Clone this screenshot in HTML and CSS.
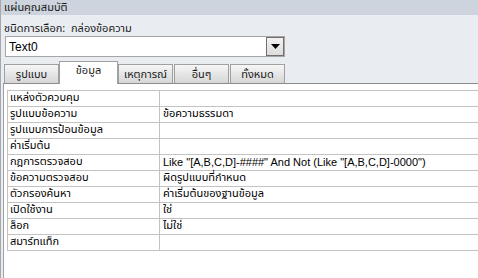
FILE: index.html
```html
<!DOCTYPE html>
<html>
<head>
<meta charset="utf-8">
<link rel="stylesheet" href="styles.css">
</head>
<body>
<div class="frame">
  <div class="titlebar">แผ่นคุณสมบัติ</div>
  <div class="selection">ชนิดการเลือก:&nbsp; กล่องข้อความ</div>
  <div class="combo">
    <span class="combo-text">Text0</span>
    <span class="combo-btn"><svg width="9" height="5" viewBox="0 0 9 5"><path d="M0 0H9L4.5 5Z" fill="#000"/></svg></span>
  </div>
  <div class="tabs">
    <div class="tab">รูปแบบ</div>
    <div class="tab active">ข้อมูล</div>
    <div class="tab">เหตุการณ์</div>
    <div class="tab">อื่นๆ</div>
    <div class="tab">ทั้งหมด</div>
  </div>
  <div class="panel">
    <div class="grid">
      <div class="row"><div class="k">แหล่งตัวควบคุม</div><div class="v"></div></div>
      <div class="row"><div class="k">รูปแบบข้อความ</div><div class="v">ข้อความธรรมดา</div></div>
      <div class="row"><div class="k">รูปแบบการป้อนข้อมูล</div><div class="v"></div></div>
      <div class="row"><div class="k">ค่าเริ่มต้น</div><div class="v"></div></div>
      <div class="row"><div class="k">กฎการตรวจสอบ</div><div class="v latin">Like "[A,B,C,D]-####" And Not (Like "[A,B,C,D]-0000")</div></div>
      <div class="row"><div class="k">ข้อความตรวจสอบ</div><div class="v">ผิดรูปแบบที่กำหนด</div></div>
      <div class="row"><div class="k">ตัวกรองค้นหา</div><div class="v">ค่าเริ่มต้นของฐานข้อมูล</div></div>
      <div class="row"><div class="k">เปิดใช้งาน</div><div class="v">ใช่</div></div>
      <div class="row"><div class="k">ล็อก</div><div class="v">ไม่ใช่</div></div>
      <div class="row"><div class="k">สมาร์ทแท็ก</div><div class="v"></div></div>
    </div>
  </div>
</div>
</body>
</html>
```
FILE: styles.css
```css
html, body {
  margin: 0;
  padding: 0;
}
body {
  width: 478px;
  height: 278px;
  overflow: hidden;
  background: #e9ecf1;
  font-family: Tahoma, "Noto Sans Thai", "Noto Sans Thai UI", "Loma", "Garuda", "DejaVu Sans", sans-serif;
  font-size: 11px;
  color: #000;
}
.frame {
  height: 278px;
  border-left: 1px solid #a4a9b0;
  display: flex;
  flex-direction: column;
}
.titlebar {
  height: 15px;
  line-height: 16px;
  background: #cdd4dd;
  padding-left: 3px;
  color: #1a1a1a;
}
.selection {
  height: 18px;
  padding-top: 3px;
  line-height: 21px;
  padding-left: 3px;
  color: #1a1a1a;
}
.combo {
  margin-left: 4px;
  width: 278px;
  height: 19px;
  border: 1px solid #a5a5a5;
  background: #fff;
  display: flex;
  align-items: center;
  justify-content: space-between;
}
.combo-text {
  padding-left: 3px;
  font-family: "Liberation Sans", Arial, sans-serif;
  font-size: 12px;
}
.combo-btn {
  width: 16px;
  height: 17px;
  border: 1px solid #786c6c;
  background: linear-gradient(#f2f2f2, #dcdcdc);
  display: flex;
  align-items: center;
  justify-content: center;
}
.tabs {
  margin-top: 4px;
  margin-left: 3px;
  height: 22px;
  display: flex;
  align-items: flex-end;
  gap: 1px;
  position: relative;
  z-index: 1;
}
.tab {
  width: 53px;
  height: 18px;
  line-height: 20px;
  border: 1px solid #a0a0a0;
  border-bottom: none;
  background: linear-gradient(#f6f6f6, #d6d6d6);
  text-align: center;
  color: #1a1a1a;
}
.tab.active {
  width: 57px;
  height: 22px;
  line-height: 18px;
  background: #fff;
  margin-bottom: -1px;
  margin-left: -1px;
  margin-right: -1px;
}
.panel {
  flex: 1;
  margin-left: 2px;
  border-top: 1px solid #8c8c8c;
  border-left: 1px solid #a0a0a0;
  background: #fff;
  padding: 6px 0 0 3px;
}
.grid {
  border-top: 1px solid #c3c3c3;
  border-left: 1px solid #c3c3c3;
}
.row {
  display: grid;
  grid-template-columns: 152px 1fr;
  height: 15px;
  border-bottom: 1px solid #c3c3c3;
  line-height: 14px;
}
.k {
  padding-left: 2px;
  border-right: 1px solid #c3c3c3;
  white-space: nowrap;
}
.v {
  padding-left: 3px;
  white-space: nowrap;
}
.latin {
  font-family: "Liberation Sans", Arial, sans-serif;
  font-size: 11px;
}
```
